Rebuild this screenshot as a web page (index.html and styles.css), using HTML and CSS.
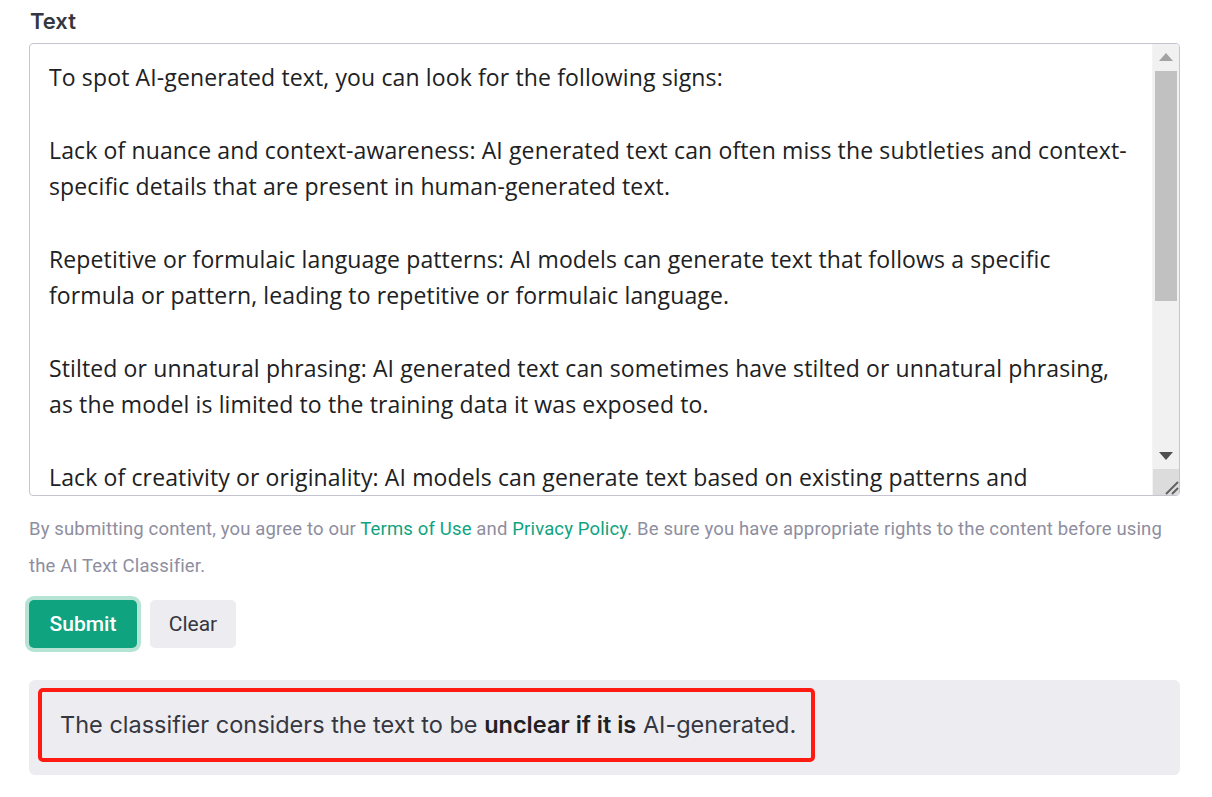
FILE: index.html
```html
<!DOCTYPE html>
<html>
<head>
<meta charset="utf-8">
<link rel="stylesheet" href="styles.css">
</head>
<body>
<div class="page">
  <div class="label">Text</div>
  <div class="field">
    <div class="content">
      <p class="ln">To spot AI-generated text, you can look for the following signs:</p>
      <p class="ln blank">&nbsp;</p>
      <p class="ln">Lack of nuance and context-awareness: AI generated text can often miss the subtleties and context-</p>
      <p class="ln">specific details that are present in human-generated text.</p>
      <p class="ln blank">&nbsp;</p>
      <p class="ln">Repetitive or formulaic language patterns: AI models can generate text that follows a specific</p>
      <p class="ln">formula or pattern, leading to repetitive or formulaic language.</p>
      <p class="ln blank">&nbsp;</p>
      <p class="ln">Stilted or unnatural phrasing: AI generated text can sometimes have stilted or unnatural phrasing,</p>
      <p class="ln">as the model is limited to the training data it was exposed to.</p>
      <p class="ln blank">&nbsp;</p>
      <p class="ln">Lack of creativity or originality: AI models can generate text based on existing patterns and</p>
    </div>
    <div class="scrollbar">
      <div class="sb-btn"><svg width="14" height="8" viewBox="0 0 14 8"><polygon points="7,0 14,8 0,8" fill="#a3a3a3"/></svg></div>
      <div class="sb-track"><div class="sb-thumb"></div></div>
      <div class="sb-btn"><svg width="14" height="8" viewBox="0 0 14 8"><polygon points="0,0 14,0 7,8" fill="#505050"/></svg></div>
      <div class="sb-corner"><svg width="16" height="16" viewBox="0 0 16 16"><line x1="3" y1="15" x2="15" y2="3" stroke="#606060" stroke-width="2"/><line x1="9" y1="15" x2="15" y2="9" stroke="#606060" stroke-width="2"/></svg></div>
    </div>
  </div>
  <p class="note">By submitting content, you agree to our <span class="lnk">Terms of Use</span> and <span class="lnk">Privacy Policy</span>. Be sure you have appropriate rights to the content before using the AI Text Classifier.</p>
  <div class="actions">
    <button class="btn btn-primary">Submit</button>
    <button class="btn btn-secondary">Clear</button>
  </div>
  <div class="result">
    <div class="highlight">The classifier considers the text to be <strong>unclear if it is</strong> AI-generated.</div>
  </div>
</div>
</body>
</html>
```

FILE: styles.css
```css
html, body {
  margin: 0;
  padding: 0;
  background: #ffffff;
}
.page {
  width: 1151px;
  margin-left: 29px;
  padding-top: 6px;
}
.label {
  font-family: "Inter", "Liberation Sans", sans-serif;
  font-weight: 600;
  font-size: 22px;
  line-height: 30px;
  color: #353740;
  padding-left: 1px;
  margin-bottom: 7px;
}
.field {
  display: flex;
  height: 453px;
  box-sizing: border-box;
  border: 1px solid #c5c5d2;
  border-radius: 4px;
  overflow: hidden;
}
.content {
  flex: 1;
  padding: 15px 0 0 19px;
  overflow: hidden;
  font-family: "Open Sans", "Noto Sans", sans-serif;
  font-size: 23px;
  letter-spacing: 0.13px;
  color: #202123;
}
.ln {
  margin: 0;
  line-height: 36.36px;
  white-space: nowrap;
}
.scrollbar {
  width: 26px;
  display: flex;
  flex-direction: column;
  background: #f1f1f1;
  border-left: 1px solid #f4f4f4;
}
.sb-btn {
  height: 26px;
  display: flex;
  align-items: center;
  justify-content: center;
}
.sb-track {
  flex: 1;
  padding: 1px 2px;
  display: flex;
  flex-direction: column;
}
.sb-thumb {
  height: 230px;
  background: #c1c1c1;
}
.sb-corner {
  height: 26px;
  background: #dcdcdc;
  display: flex;
  align-items: flex-end;
  justify-content: flex-end;
}
.note {
  margin: 15px 0 0 0;
  font-family: "Roboto", "Liberation Sans", sans-serif;
  font-size: 18.5px;
  letter-spacing: 0.15px;
  line-height: 37px;
  color: #8e8ea0;
}
.lnk {
  color: #10a37f;
}
.actions {
  display: flex;
  gap: 13px;
  margin-top: 15px;
}
.btn {
  height: 48px;
  border: none;
  border-radius: 5px;
  font-family: "Roboto", "Liberation Sans", sans-serif;
  font-size: 21px;
  padding: 0;
}
.btn-primary {
  width: 108px;
  background: #10a37f;
  color: #ffffff;
  font-weight: 500;
  box-shadow: 0 0 0 4px #b5e3d4;
}
.btn-secondary {
  width: 86px;
  background: #ececf1;
  color: #353740;
}
.result {
  margin-top: 32px;
  background: #ececf1;
  border-radius: 6px;
  height: 95px;
  padding: 8px 9px;
  box-sizing: border-box;
}
.highlight {
  display: inline-block;
  box-sizing: border-box;
  height: 74px;
  width: 777px;
  border: 4px solid #ff1a12;
  border-radius: 5px;
  padding: 0 18px;
  font-family: "Inter", "Liberation Sans", sans-serif;
  font-size: 23.5px;
  line-height: 66px;
  color: #353740;
  white-space: nowrap;
}
.highlight strong {
  font-weight: 600;
  color: #202123;
}
```
